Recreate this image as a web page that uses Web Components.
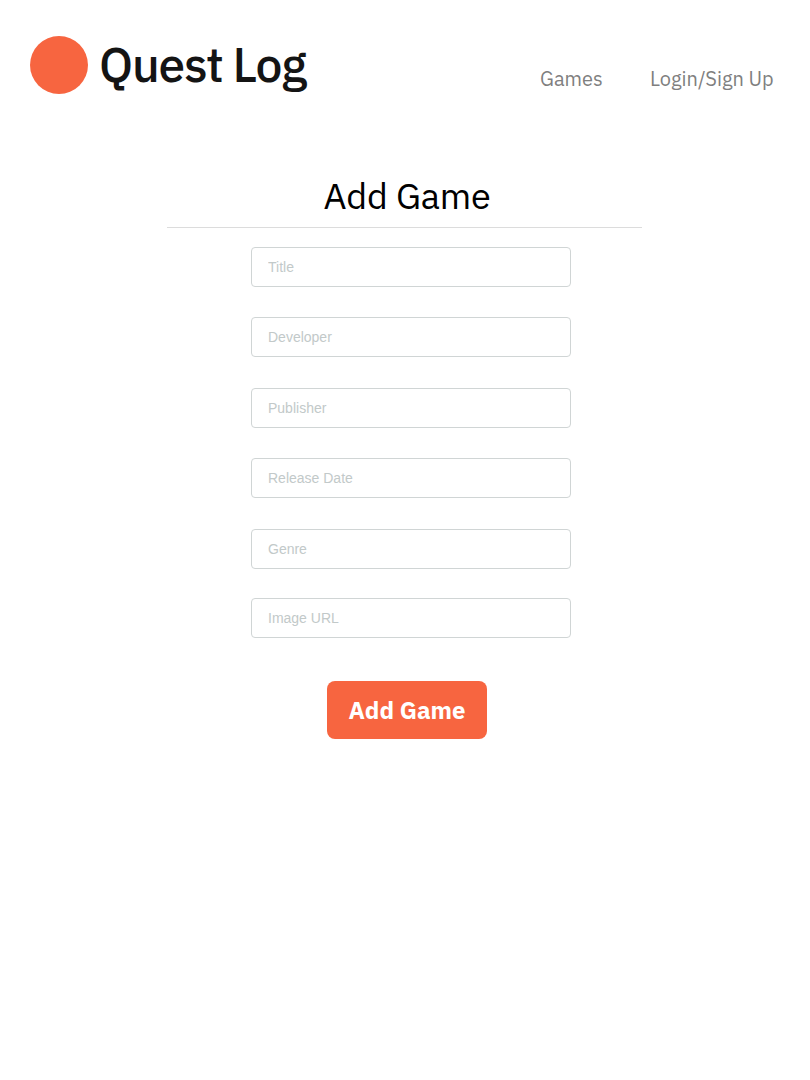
<!DOCTYPE html>
<html lang="en">
<head>
<meta charset="utf-8">
<title>Quest Log</title>
<style>
body { margin: 0; background: #fff; font-family: "IBM Plex Sans", Roboto, sans-serif; --accent: #f76540; }
</style>
</head>
<body>
<quest-header>
  <quest-link style="width:63px">Games</quest-link>
  <quest-link style="width:124px">Login/Sign Up</quest-link>
</quest-header>
<game-form heading="Add Game">
  <game-field label="Title"></game-field>
  <game-field label="Developer"></game-field>
  <game-field label="Publisher" style="margin-top:31px"></game-field>
  <game-field label="Release Date"></game-field>
  <game-field label="Genre" style="margin-top:31px"></game-field>
  <game-field label="Image URL" style="margin-top:29px"></game-field>
  <quest-button slot="action">Add Game</quest-button>
</game-form>
<script>
const define = (name, html, setup) => customElements.define(name, class extends HTMLElement {
  constructor() {
    super();
    this.attachShadow({ mode: 'open' }).innerHTML = html;
  }
  connectedCallback() { if (setup) setup(this, this.shadowRoot); }
});

define('quest-header', `
  <style>
    :host { display: flex; height: 130px; box-sizing: border-box; padding: 36px 36px 0 30px; justify-content: space-between; align-items: flex-start; }
    .brand { display: flex; gap: 11px; }
    svg { display: block; width: 58px; height: 58px; }
    .name { font-size: 48px; line-height: 56px; font-weight: 500; letter-spacing: -1.2px; color: #141414; white-space: nowrap; }
    nav { display: flex; gap: 47px; padding-top: 30px; }
  </style>
  <div class="brand">
    <svg viewBox="0 0 58 58"><circle cx="29" cy="29" r="29" fill="var(--accent)"/></svg>
    <span class="name">Quest Log</span>
  </div>
  <nav><slot></slot></nav>`);

define('quest-link', `
  <style>
    :host { display: block; font-size: 20px; line-height: 26px; color: #7f7f7f; white-space: nowrap; }
  </style><slot></slot>`);

define('game-form', `
  <style>
    :host { display: block; width: 475px; margin: 44px 0 0 167px; }
    h1 { margin: 0; height: 53px; line-height: 44px; font-size: 36px; font-weight: 400; color: #000; text-align: center; padding-left: 5px; letter-spacing: -.2px; border-bottom: 1px solid #dcdcdc; white-space: nowrap; }
    .fields { display: flex; flex-direction: column; width: 320px; margin: 19px 0 0 84px; }
    .action { display: flex; margin: 43px 0 0 160px; }
  </style>
  <h1></h1>
  <div class="fields"><slot></slot></div>
  <div class="action"><slot name="action"></slot></div>`,
  (el, root) => { root.querySelector('h1').textContent = el.getAttribute('heading'); });

define('game-field', `
  <style>
    :host { display: block; margin-top: 30px; }
    :host(:first-child) { margin-top: 0; }
    input { display: block; box-sizing: border-box; width: 100%; height: 40px; margin: 0; padding: 0 16px; border: 1px solid #d0d5d5; border-radius: 4px; background: #fff; outline: 0; font: 14px "Liberation Sans", Arial, sans-serif; }
    input::placeholder { color: #c2c9c9; opacity: 1; }
  </style>
  <input type="text">`,
  (el, root) => { root.querySelector('input').placeholder = el.getAttribute('label'); });

define('quest-button', `
  <style>
    :host { display: block; }
    button { display: block; width: 160px; height: 58px; padding: 0; border: 0; border-radius: 8px; background: var(--accent); color: #fff; font: 700 24px/58px "IBM Plex Sans", Roboto, sans-serif; white-space: nowrap; }
  </style>
  <button type="button"><slot></slot></button>`);
</script>
</body>
</html>
